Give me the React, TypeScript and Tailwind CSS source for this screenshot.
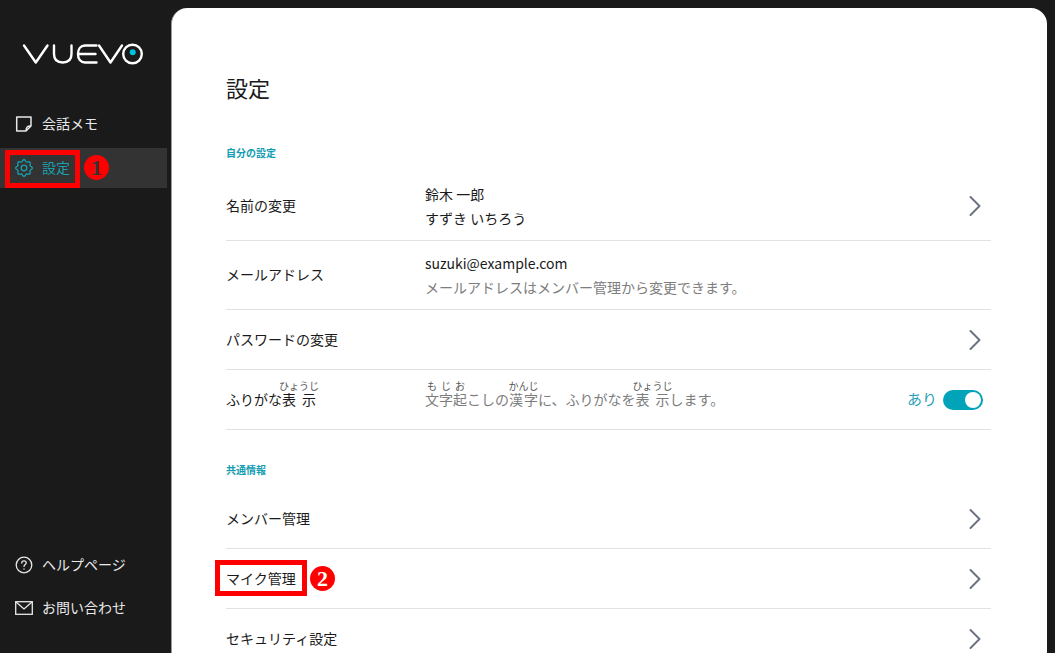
const font = { fontFamily: '"Noto Sans CJK JP", "Noto Sans", sans-serif' };

function Chevron() {
  return (
    <svg width="14" height="22" viewBox="0 0 14 22" fill="none" stroke="#6b7280" strokeWidth="2" strokeLinecap="round" strokeLinejoin="round" className="mr-[9px] shrink-0">
      <path d="M2.5 2 L11.5 11 L2.5 20" />
    </svg>
  );
}

function Row({ label, h, children, right, tall }: { label: React.ReactNode; h: string; children?: React.ReactNode; right?: React.ReactNode; tall?: boolean }) {
  return (
    <div className={`flex items-center border-b border-[#e2e2e2] ${h}`}>
      <div className={`w-[199px] shrink-0 text-[14px] text-[#1a1a1a] ${tall ? "pb-[2px]" : ""}`}>{label}</div>
      <div className={`flex-1 text-[14px] leading-[24px] text-[#1a1a1a] ${tall ? "pb-[1px]" : ""}`}>{children}</div>
      {right}
    </div>
  );
}

function Rb({ t, r }: { t: string; r: string }) {
  return (
    <ruby>
      {t}
      <rt className="text-[10px] text-[#555]">{r}</rt>
    </ruby>
  );
}

function Logo() {
  return (
    <svg width="122" height="24" viewBox="0 0 122 24" fill="none" stroke="#fff" strokeWidth="2.4" strokeLinecap="round" strokeLinejoin="round">
      <path d="M2 3.5 L13.8 20.5 L25.5 3.5" />
      <path d="M32 3.5 V12 C32 18 35 20.5 40.7 20.5 C46.5 20.5 49.5 18 49.5 12 V3.5" />
      <path d="M74.5 3.5 H63 C58.5 3.5 56 7 56 12 C56 17 58.5 20.5 63 20.5 H74.5 M57.5 12 H73.5" />
      <path d="M77 3.5 L88.5 20.5 L100 3.5" />
      <circle cx="110.5" cy="12" r="9.3" />
      <circle cx="110.7" cy="10.3" r="3" fill="#00c2e0" stroke="none" />
    </svg>
  );
}

function gearPath() {
  const pts: string[] = [];
  for (let i = 0; i < 96; i++) {
    const a = (i / 96) * Math.PI * 2;
    const r = 7.4 + 0.9 * Math.cos(8 * a);
    pts.push(`${(9 + r * Math.cos(a)).toFixed(2)} ${(9 + r * Math.sin(a)).toFixed(2)}`);
  }
  return `M${pts.join(" L")} Z`;
}

function Nav({ icon, label, active }: { icon: React.ReactNode; label: string; active?: boolean }) {
  return (
    <div className={`flex h-[40px] items-center gap-[9px] pl-[15px] text-[14px] ${active ? "bg-[#333333] text-[#1a9fb0]" : "text-[#e8e8e8]"}`}>
      {icon}
      <span className="pb-[2px]">{label}</span>
    </div>
  );
}

function NumBadge({ n, className }: { n: string; className: string }) {
  return (
    <div className={`absolute flex h-[25px] w-[25px] items-center justify-center rounded-full bg-[#ff0000] text-[22px] font-bold ${className}`} style={{ fontFamily: '"Liberation Serif", serif' }}>
      {n}
    </div>
  );
}

export default function App() {
  return (
    <div className="relative flex h-[653px] w-[1055px] overflow-hidden bg-[#1a1a1a]" style={font}>
      <aside className="flex w-[171px] shrink-0 flex-col pr-[4px]">
        <div className="ml-[22px] mt-[42px] h-[24px]">
          <Logo />
        </div>
        <nav className="mt-[38px] flex flex-col gap-[4px]">
          <Nav
            label="会話メモ"
            icon={
              <svg width="18" height="18" viewBox="0 0 18 18" fill="none" stroke="#e8e8e8" strokeWidth="1.5" strokeLinejoin="round">
                <path d="M1.7 2 H16 V11 L11 16 H1.7 Z M16 11 C13 10.5 11 12 11 16" />
              </svg>
            }
          />
          <Nav
            active
            label="設定"
            icon={
              <svg width="18" height="18" viewBox="0 0 18 18" fill="none" stroke="#1a9fb0" strokeWidth="1.3" strokeLinejoin="round">
                <path d={gearPath()} />
                <circle cx="9" cy="9" r="2.8" />
              </svg>
            }
          />
        </nav>
        <div className="mt-auto mb-[25px] flex flex-col gap-[3px]">
          <Nav
            label="ヘルプページ"
            icon={
              <svg width="18" height="18" viewBox="0 0 18 18" fill="none" stroke="#e8e8e8" strokeWidth="1.3" strokeLinecap="round">
                <circle cx="9" cy="9" r="7.8" />
                <path d="M6.8 7 C6.8 5.6 7.8 4.9 9 4.9 C10.3 4.9 11.2 5.7 11.2 6.9 C11.2 8.5 9 8.6 9 10.4" />
                <path d="M9 12.8 V13" />
              </svg>
            }
          />
          <Nav
            label="お問い合わせ"
            icon={
              <svg width="18" height="14" viewBox="0 0 18 14" fill="none" stroke="#e8e8e8" strokeWidth="1.3">
                <rect x="0.7" y="0.7" width="16.6" height="12.6" />
                <path d="M1 1 L9 8 L17 1" />
              </svg>
            }
          />
        </div>
      </aside>

      <main className="mt-[8px] mr-[8px] flex-1 overflow-hidden rounded-t-[16px] border-l border-[#9a9a9a] bg-white pl-[54px] pr-[56px]">
        <h1 className="mt-[61px] text-[22px] leading-[36px] text-[#1a1a1a]">設定</h1>
        <h2 className="mt-[40px] text-[10px] leading-[16px] font-bold text-[#149db3]">自分の設定</h2>
        <div className="mt-[11px]">
          <Row tall label="名前の変更" h="h-[69px]" right={<Chevron />}>
            <div>鈴木 一郎</div>
            <div>すずき いちろう</div>
          </Row>
          <Row tall label="メールアドレス" h="h-[69px]">
            <div>suzuki@example.com</div>
            <div className="text-[#7d7d7d]">メールアドレスはメンバー管理から変更できます。</div>
          </Row>
          <Row label="パスワードの変更" h="h-[60px]" right={<Chevron />} />
          <Row
            label={<span className="block pb-[8px]">ふりがな<Rb t="表示" r="ひょうじ" /></span>}
            h="h-[60px]"
            right={
              <div className="flex items-center gap-[6px] pr-[8px]">
                <span className="text-[15px] text-[#2b9fb5]">あり</span>
                <div className="flex h-[20px] w-[40px] items-center justify-end rounded-full bg-[#00a3b8] pr-[2px]">
                  <div className="h-[16px] w-[16px] rounded-full bg-white" />
                </div>
              </div>
            }
          >
            <span className="block pb-[8px] text-[#7d7d7d]">
              <Rb t="文字起" r="もじお" />こしの<Rb t="漢字" r="かんじ" />に、ふりがなを<Rb t="表示" r="ひょうじ" />します。
            </span>
          </Row>
        </div>
        <h2 className="mt-[32px] text-[10px] leading-[16px] font-bold text-[#149db3]">共通情報</h2>
        <div className="mt-[11px]">
          <Row label="メンバー管理" h="h-[60px]" right={<Chevron />} />
          <Row label="マイク管理" h="h-[60px]" right={<Chevron />} />
          <Row label="セキュリティ設定" h="h-[60px]" right={<Chevron />} />
        </div>
      </main>

      <div className="absolute left-[5px] top-[150px] h-[38px] w-[75px] border-[5px] border-[#ff0000]" />
      <NumBadge n="1" className="left-[84px] top-[155px] text-[#333333]" />
      <div className="absolute left-[215px] top-[560px] h-[36px] w-[92px] border-[5px] border-[#ff0000]" />
      <NumBadge n="2" className="left-[310px] top-[566px] text-white" />
    </div>
  );
}
